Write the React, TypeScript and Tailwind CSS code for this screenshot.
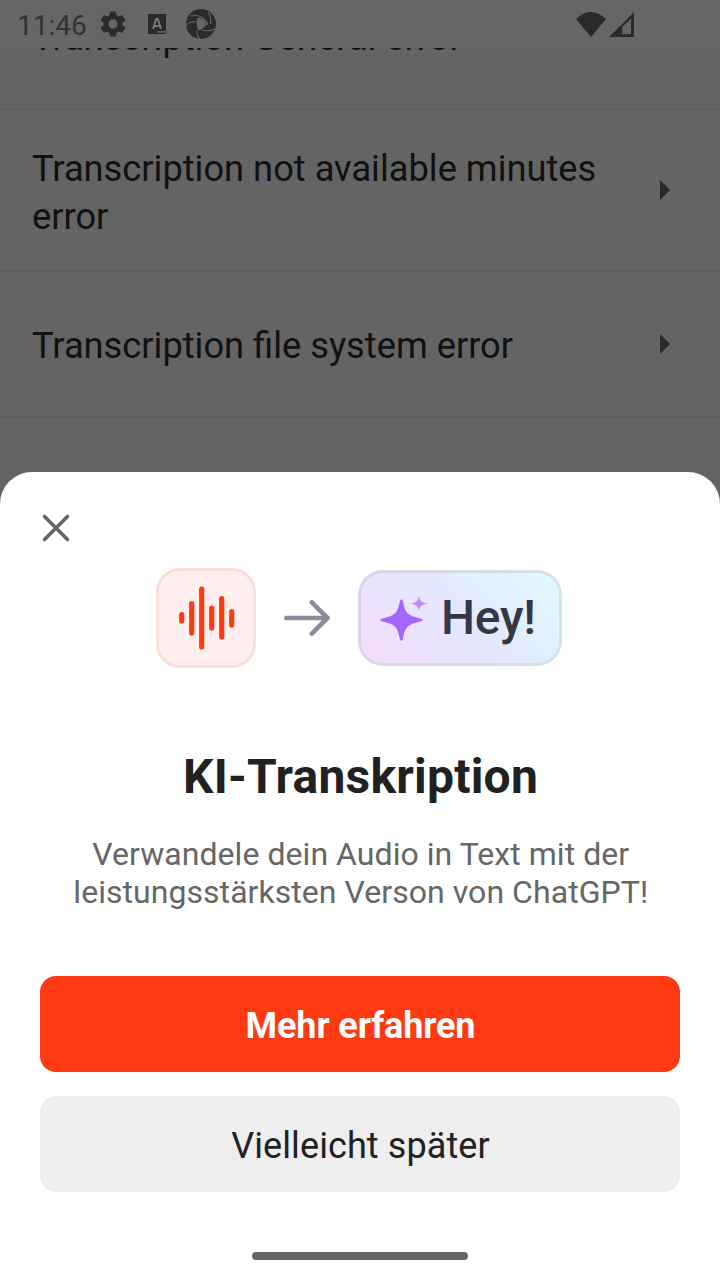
import React from "react";

function StatusBar() {
  return (
    <header className="flex h-12 shrink-0 items-center bg-[#666666] pl-[17px] text-[#2a2a2a]">
      <span className="w-[83px] whitespace-nowrap pt-1 text-[28px] leading-none text-[#333333]">11:46</span>
      <svg className="h-[26px] w-[26px] shrink-0" viewBox="2 2 20 20" preserveAspectRatio="none" fill="currentColor">
        <path d="M19.14 12.94c.04-.3.06-.61.06-.94 0-.32-.02-.64-.07-.94l2.03-1.58a.49.49 0 0 0 .12-.61l-1.92-3.32a.49.49 0 0 0-.59-.22l-2.39.96c-.5-.38-1.03-.7-1.62-.94l-.36-2.54a.48.48 0 0 0-.48-.41h-3.84c-.24 0-.43.17-.47.41l-.36 2.54c-.59.24-1.13.57-1.62.94l-2.39-.96a.48.48 0 0 0-.59.22L2.74 8.87c-.12.21-.08.47.12.61l2.03 1.58c-.05.3-.09.63-.09.94s.02.64.07.94l-2.03 1.58a.49.49 0 0 0-.12.61l1.92 3.32c.12.22.37.29.59.22l2.39-.96c.5.38 1.03.7 1.62.94l.36 2.54c.05.24.24.41.48.41h3.84c.24 0 .44-.17.47-.41l.36-2.54c.59-.24 1.13-.56 1.62-.94l2.39.96c.22.08.47 0 .59-.22l1.92-3.32a.48.48 0 0 0-.12-.61l-2.01-1.58zM12 15.6a3.6 3.6 0 1 1 0-7.2 3.6 3.6 0 0 1 0 7.2z" />
      </svg>
      <svg className="ml-[22px] h-5 w-[18px] shrink-0" viewBox="0 0 18 20">
        <rect width="18" height="20" rx="1" fill="currentColor" />
        <path d="M5 15 8.2 5h1.6L13 15M6.2 12h5.6" fill="none" stroke="#777777" strokeWidth="2" />
        <path d="M9.5 17h2v1.7h-2zM12.5 17h2v1.7h-2zM15.4 17h2v1.7h-2z" fill="#777777" />
      </svg>
      <svg className="ml-5 h-[30px] w-[30px] shrink-0" viewBox="0 0 30 30">
        <circle cx="15" cy="15" r="15" fill="currentColor" />
        <path d="M11 9.5 14 8.8 18 10.5 21 15.5 16.5 19.5 12 21.5 11 17z" fill="#666666" />
        <path d="M0 16.5Q4 12 11.5 13M4.5 7Q13 5 18 10T21 15.5M22.5 3.5Q25.5 9 24.5 15M29 20Q23 23 15 21M14 30Q10 26 11 21" fill="none" stroke="#666666" strokeWidth="1.1" />
      </svg>
      <svg className="ml-[360px] h-[25px] w-[30px] shrink-0" viewBox="0 0 30 25" fill="currentColor">
        <path d="M0 7Q15-7 30 7L15 25z" />
      </svg>
      <svg className="ml-[3px] h-[25px] w-[25px] shrink-0" viewBox="0 0 25 25">
        <path fill="currentColor" fillRule="evenodd" d="M25 0v25H0zM22 6.5 13.3 15v7.2H22z" />
      </svg>
    </header>
  );
}

function Row({ className, textClassName, children }: { className: string; textClassName: string; children: React.ReactNode }) {
  return (
    <div className={`flex shrink-0 items-center justify-between border-b border-[#5d5d5d] pl-8 pr-[50px] ${className}`}>
      <div className={`w-[590px] text-[36.25px] leading-[48px] text-[#111111] ${textClassName}`}>{children}</div>
      <svg className="h-5 w-2.5" viewBox="0 0 10 20">
        <path d="M0 0 10 10 0 20z" fill="#292929" />
      </svg>
    </div>
  );
}

function SheetArt() {
  return (
    <div className="mt-6 flex h-[100px] items-center pl-[156px]">
      <div className="flex h-[100px] w-[100px] items-center justify-center rounded-[24px] border-[3px] border-[#fbded8] bg-[#fff0ef]">
        <svg className="h-[94px] w-[94px]" viewBox="3 3 94 94">
          <path d="M25.7 46.5v6.5M35.7 35.5v29.5M45.7 21v58M55.7 40v20M65.7 30.5v38.5M75.7 43.5v13.5" stroke="#ff3b12" strokeWidth="5.2" strokeLinecap="round" />
        </svg>
      </div>
      <svg className="ml-7 h-9 w-[46px]" viewBox="0 0 46 36" fill="none" stroke="#93899e" strokeWidth="4.6" strokeLinecap="round" strokeLinejoin="round">
        <path d="M2.3 18H43.5M27.8 2.3 43.5 18 27.8 33.7" />
      </svg>
      <div className="ml-[27.5px] h-24 w-[204.5px] rounded-[25px] bg-gradient-to-r from-[#ded2ea] to-[#cfe5ec] p-[3px]">
        <div className="flex h-full w-full items-center rounded-[22px] bg-[linear-gradient(45deg,#f5dcff_0%,#e4e8ff_52%,#e0faff_100%)] pl-[19.5px]">
          <svg className="mt-0.5 h-[46px] w-12 shrink-0" viewBox="0 0 48 46">
            <path d="M21.4 3.5c.9 0 1.3.7 1.5 1.6 2.5 12.5 4.4 14.2 17.5 17.5 2.8.7 2.8 2.2 0 2.9-13.1 3.3-15 5-17.5 17.5-.3 2.3-2.7 2.3-3 0-2.5-12.5-4.4-14.2-17.5-17.5-2.8-.7-2.8-2.2 0-2.9 13.1-3.3 15-5 17.5-17.5.2-.9.6-1.6 1.5-1.6z" fill="#a566ff" />
            <path d="M39 0c1.2 5.4 2.2 6.4 9 7.6-6.8 1.3-7.8 2.3-9 7.6-1.2-5.3-2.2-6.3-9-7.6 6.8-1.2 7.8-2.2 9-7.6z" fill="#bd8cff" />
          </svg>
          <span className="ml-[13px] text-[48px] font-medium leading-none tracking-[-0.2px] text-[#343746]">Hey!</span>
        </div>
      </div>
    </div>
  );
}

export default function App() {
  return (
    <div className="flex h-[1280px] w-[720px] flex-col overflow-hidden bg-[#646464] font-['Roboto',sans-serif]">
      <StatusBar />
      <main className="flex h-[424px] shrink-0 flex-col overflow-hidden">
        <div className="flex h-[62px] shrink-0 flex-col justify-end overflow-hidden border-b border-[#5d5d5d] pb-[47px] pl-8">
          <div className="text-[36.25px] leading-[48px] text-[#111111]">Transcription General error</div>
        </div>
        <Row className="h-[162px] pb-px" textClassName="pt-[5px]">Transcription not available minutes error</Row>
        <Row className="h-[145px]" textClassName="pt-[3px]">Transcription file system error</Row>
      </main>
      <section className="flex h-[808px] shrink-0 flex-col rounded-t-[32px] bg-white">
        <button className="ml-10 mt-10 flex h-8 w-8 items-center justify-center" aria-label="Schließen">
          <svg className="h-8 w-8" viewBox="0 0 32 32" stroke="#666666" strokeWidth="3.6" strokeLinecap="round">
            <path d="m4.5 4.5 23 23m0-23-23 23" />
          </svg>
        </button>
        <SheetArt />
        <h1 className="mt-[81px] pl-px text-center text-[48px] font-bold leading-[56px] tracking-[0.22px] text-[#212121]">KI-Transkription</h1>
        <p className="mt-[30px] pl-[1.5px] text-center text-[32px] leading-[38px] tracking-[0.05px] text-[#666666]">
          Verwandele dein Audio in Text mit der
          <br />
          leistungsstärksten Verson von ChatGPT!
        </p>
        <div className="mt-[65px] flex flex-col gap-6 px-10">
          <button className="h-24 rounded-2xl bg-[#ff3a12] pl-px pt-[3px] text-[36px] font-bold tracking-[-0.08px] text-white">Mehr erfahren</button>
          <button className="h-24 rounded-2xl bg-[#eeeeee] pl-px pt-[3px] text-[36px] tracking-[0.1px] text-[#212121]">Vielleicht später</button>
        </div>
        <div className="mt-[60px] h-2 w-[216px] self-center rounded-full bg-[#666666]" />
      </section>
    </div>
  );
}
